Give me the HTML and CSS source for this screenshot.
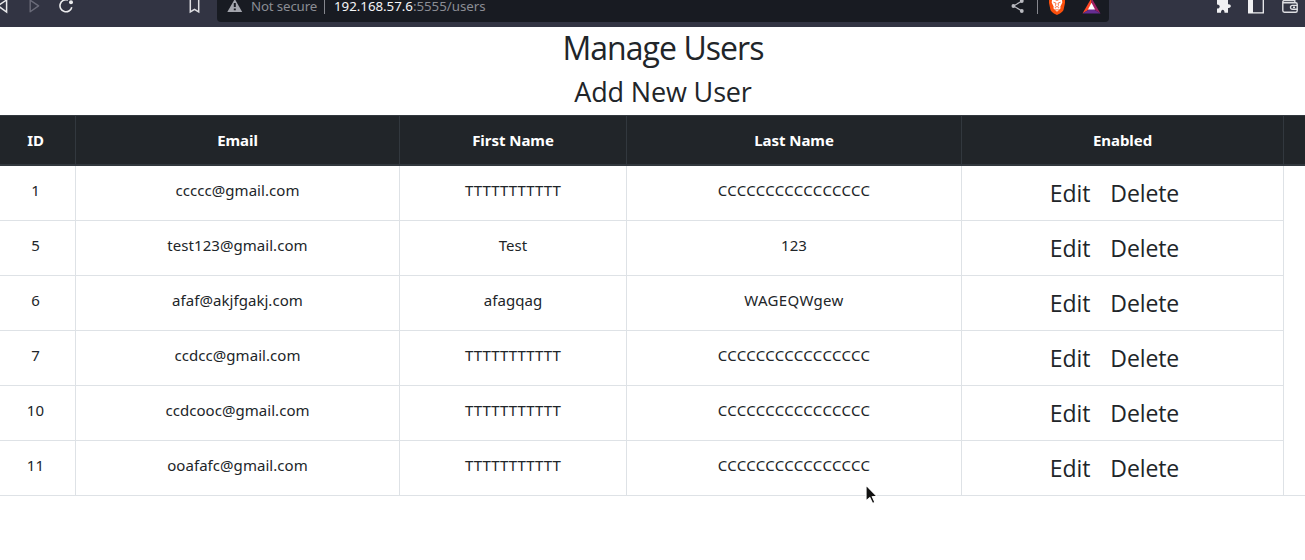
FILE: index.html
```html
<!DOCTYPE html>
<html lang="en">
<head>
<meta charset="utf-8">
<title>Manage Users</title>
<link rel="stylesheet" href="styles.css">
</head>
<body>
<header class="toolbar">
  <nav class="nav">
    <svg class="ic back" width="10" height="16" viewBox="0 0 10 16" fill="none" stroke="#e8e8ea" stroke-width="1.5"><path d="M6.6 -1V12L-2 5.8L6.6 0"/></svg>
    <svg class="ic fwd" width="12" height="16" viewBox="0 0 12 16" fill="none" stroke="#6a6b79" stroke-width="1.4" stroke-linejoin="round"><path d="M1.2 .2L9.6 5.9L1.2 11.8Z"/></svg>
    <svg class="ic reload" width="16" height="16" viewBox="0 0 16 16" fill="none" stroke="#ececee" stroke-width="1.6"><path d="M9 .1A6 6 0 1 0 12.8 7.2"/><circle cx="12" cy="2.2" r="2" fill="#ececee" stroke="none"/></svg>
    <svg class="ic mark" width="12" height="16" viewBox="0 0 12 16" fill="none" stroke="#dedee2" stroke-width="1.5"><path d="M1.3 -2V12L5.5 9.3L9.7 12V-2"/></svg>
  </nav>
  <div class="address">
    <svg class="ic warn" width="16" height="14" viewBox="0 0 16 14"><path d="M7.8 -1L15.2 12H.3Z" fill="#a3a5ad"/><path d="M7.8 3V7M7.8 8.4V10.3" stroke="#181b22" stroke-width="2"/></svg>
    <span class="secure">Not secure</span>
    <span class="bar"></span>
    <span class="url"><b class="host">192.168.57.6</b>:5555/users</span>
    <div class="badges">
      <svg class="ic" width="14" height="14" viewBox="0 0 14 14"><path d="M11 1L2.5 6L11 11" fill="none" stroke="#b9bac0" stroke-width="1.2"/><g fill="#b9bac0"><circle cx="10.8" cy="1" r="1.9"/><circle cx="2.4" cy="6" r="1.9"/><circle cx="10.8" cy="11" r="1.9"/></g></svg>
      <span class="bar share-bar"></span>
      <svg class="ic" width="16" height="16" viewBox="0 0 16 16"><path d="M0 -1H16V3L14.6 9.4C14 12 10.5 13.6 8 15C5.5 13.6 2 12 1.4 9.4L0 3Z" fill="#fb4f0c"/><path d="M3 0H6L8 .8L10 0H13L13.3 2.5L11.3 6.7L11.6 8.3L8 11.8L4.4 8.3L4.7 6.7L2.7 2.5Z" fill="#fff"/><path d="M4.4 2.2L7 3.2L6.5 5.7M11.6 2.2L9 3.2L9.5 5.7M5.8 7.6L8 6.5L10.2 7.6M6.2 9L8 10.2L9.8 9" fill="none" stroke="#fb4f0c" stroke-width=".8"/></svg>
      <svg class="ic bat" width="20" height="14" viewBox="0 0 20 14"><path d="M9.5 -2L.5 13.5L9.5 8Z" fill="#ff4724"/><path d="M9.5 -2L18.5 13.5L9.5 8Z" fill="#9e1f63"/><path d="M.5 13.5H18.5L9.5 8Z" fill="#662d91"/><path d="M9.5 2.8L13 9.6H6Z" fill="#fff"/></svg>
    </div>
  </div>
  <div class="tools">
    <svg class="ic" width="16" height="14" viewBox="0 0 16 14"><path d="M1 0H4.7C4.7 -3 8.8 -3 8.8 0H12V4.2C15.8 3.7 15.8 8.5 12 8V12.8H8.5C8.7 8.8 4.8 8.8 5 12.8H1V8.6C4.6 8.8 4.6 4.2 1 4.4Z" fill="#f0f0f2"/></svg>
    <svg class="ic" width="16" height="14" viewBox="0 0 16 14"><path d="M.7 -1V12.8H15.3V-1" fill="none" stroke="#f0f0f2" stroke-width="1.3"/><path d="M0 -1H5V13H0Z" fill="#f0f0f2"/></svg>
    <svg class="ic wallet" width="17" height="14" viewBox="0 0 17 14" fill="none" stroke="#dedee2" stroke-width="1.4"><path d="M12.8 2.6V.6H2.2Q.8 .6 .8 2V10.6Q.8 12.3 2.4 12.3H13.6Q15.2 12.3 15.2 10.8V4.2Q15.2 2.7 13.7 2.7H1.5"/><path d="M15.5 5.4H10.5Q8.5 5.4 8.5 7.3T10.5 9.2H15.5M11 7.3H13"/></svg>
  </div>
</header>
<main>
  <h1 class="title">Manage Users</h1>
  <h2 class="subtitle">Add New User</h2>
  <div class="table">
    <div class="row head"><div class="id">ID</div><div>Email</div><div>First Name</div><div>Last Name</div><div>Enabled</div><div></div></div>
    <div class="row"><div class="id">1</div><div>ccccc@gmail.com</div><div class="ts">TTTTTTTTTTT</div><div class="last">CCCCCCCCCCCCCCCC</div><div class="actions"><a>Edit</a><a>Delete</a></div><div></div></div>
    <div class="row"><div class="id">5</div><div>test123@gmail.com</div><div>Test</div><div>123</div><div class="actions"><a>Edit</a><a>Delete</a></div><div></div></div>
    <div class="row"><div class="id">6</div><div>afaf@akjfgakj.com</div><div>afagqag</div><div class="last">WAGEQWgew</div><div class="actions"><a>Edit</a><a>Delete</a></div><div></div></div>
    <div class="row"><div class="id">7</div><div>ccdcc@gmail.com</div><div class="ts">TTTTTTTTTTT</div><div class="last">CCCCCCCCCCCCCCCC</div><div class="actions"><a>Edit</a><a>Delete</a></div><div></div></div>
    <div class="row"><div class="id">10</div><div>ccdcooc@gmail.com</div><div class="ts">TTTTTTTTTTT</div><div class="last">CCCCCCCCCCCCCCCC</div><div class="actions"><a>Edit</a><a>Delete</a></div><div></div></div>
    <div class="row"><div class="id">11</div><div>ooafafc@gmail.com</div><div class="ts">TTTTTTTTTTT</div><div class="last">CCCCCCCCCCCCCCCC</div><div class="actions"><a>Edit</a><a>Delete</a></div><div></div></div>
  </div>
</main>
<svg class="cursor" width="16" height="24" viewBox="0 0 16 24"><path d="M2 1V17L5.8 13.8L8.6 19.6L11 18.4L8.4 12.8L13 12.4Z" fill="#111" stroke="#fff" stroke-width="1.2"/></svg>
</body>
</html>
```
FILE: styles.css
```css
* { box-sizing: border-box; }
body {
  margin: 0;
  height: 560px;
  overflow: hidden;
  background: #fff;
  color: #212529;
  font-family: "Noto Sans", "Open Sans", sans-serif;
}
.ic { display: block; flex: none; }

.toolbar {
  display: flex;
  height: 27px;
  background: #323443;
  overflow: hidden;
}
.nav { display: flex; width: 217px; flex: none; }
.back { margin-right: 19px; }
.fwd { margin-right: 18px; }
.reload { margin-right: 114px; }
.address {
  display: flex;
  width: 892px;
  height: 22px;
  padding-left: 10px;
  flex: none;
  border-radius: 0 0 4px 4px;
  background: #181b22;
  color: #8b8d94;
  font: 13.3px/12px "Noto Sans", sans-serif;
  white-space: nowrap;
}
.secure { width: 66px; margin-left: 8px; letter-spacing: -.15px; }
.bar { width: 1px; height: 14px; margin-left: 7px; background: #85878e; }
.url { margin-left: 9px; letter-spacing: -.02px; }
.host { color: #f4f4f6; font-weight: 400; }
.badges { display: flex; margin-left: auto; padding-right: 7px; }
.share-bar { margin: 0 11px 0 12px; }
.bat { margin-left: 17px; }
.tools { display: flex; gap: 16px; margin-left: 107px; }
.wallet { margin-left: 2px; }

.title, .subtitle {
  margin: 0;
  padding-left: 21px;
  text-align: center;
  font-family: "Open Sans", sans-serif;
  font-weight: 400;
}
.title { height: 44px; font-size: 32px; line-height: 42px; letter-spacing: -.95px; }
.subtitle { height: 44px; font-size: 27px; line-height: 41px; letter-spacing: -.15px; }

.row {
  display: grid;
  grid-template-columns: 76px 324px 227px 335px 322px 21px;
  grid-template-rows: 100%;
  height: 55px;
  border-bottom: 1px solid #dee2e6;
  text-align: center;
  font-size: 15px;
  line-height: 49px;
  letter-spacing: .05px;
}
.row > div { border-right: 1px solid #dee2e6; white-space: nowrap; }
.row > div:last-child { border-right: 0; }
.row > .id { padding-right: 4px; }
.row:not(.head):not(:last-child) > div:last-child { margin-bottom: -1px; background: #fff; }
.row > .ts { letter-spacing: .1px; }
.row > .last { letter-spacing: .33px; }
.row.head {
  height: 51px;
  border-top: 1px solid #32383e;
  border-bottom: 2px solid #32383e;
  background: #212529;
  color: #fff;
  font-weight: 700;
  letter-spacing: -.05px;
}
.row.head > div { border-color: #32383e; }
.row > .actions {
  display: flex;
  justify-content: center;
  gap: 20px;
  padding-right: 16px;
  font-family: "Open Sans", sans-serif;
  font-size: 23px;
  line-height: 55px;
  letter-spacing: -.1px;
}
.cursor { position: absolute; left: 864px; top: 484px; }
```
